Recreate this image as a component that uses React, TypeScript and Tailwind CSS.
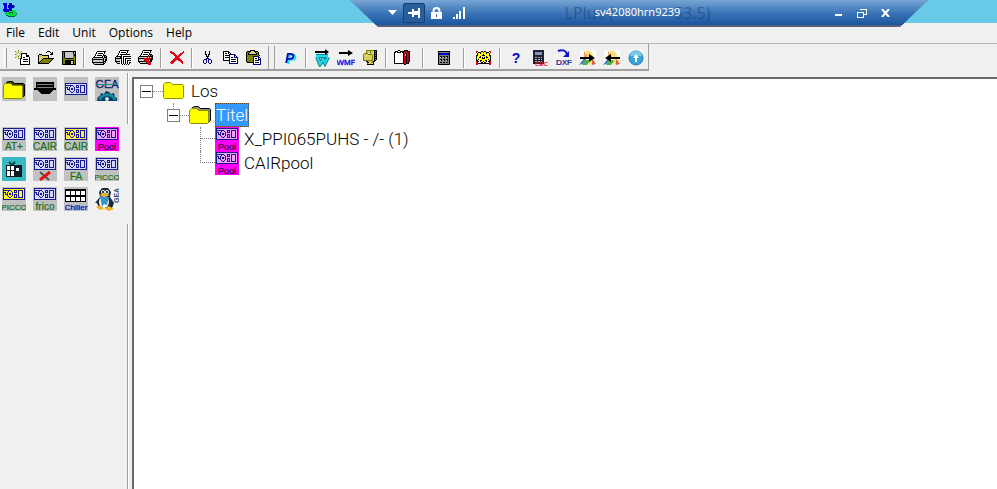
import type { ReactNode } from 'react';

const colors: Record<string, string> = {
  k: '#000000',
  w: '#ffffff',
  o: '#808000',
  O: '#b8b858',
  y: '#ffff00',
  Y: '#d8d060',
  n: '#000080',
  b: '#0000e0',
  g: '#808080',
  s: '#c8c8c8',
  r: '#e80010',
  R: '#901018',
  c: '#20d0e8',
  t: '#108090',
  l: '#00d848',
  G: '#006040',
};

// Small bitmap icons, one character for each pixel.
function Bitmap({ rows }: { rows: string[] }) {
  const width = Math.max(...rows.map((row) => row.length));
  return (
    <svg width={width} height={rows.length} viewBox={`0 0 ${width} ${rows.length}`} shapeRendering="crispEdges" aria-hidden="true">
      {rows.flatMap((row, y) =>
        row.split('').map((c, x) => (colors[c] ? <rect key={`${x}-${y}`} x={x} y={y} width={1} height={1} fill={colors[c]} /> : null)),
      )}
    </svg>
  );
}

const appIcon = [
  '.bbbb..bbb......',
  '.bbbb..nbb......',
  '..bnb.nnnnnn....',
  '..bnb.bbbbbbb...',
  '..bnb.nbbbnn....',
  '..bnb..nbb......',
  '.bbnbbbbbb......',
  '.bbbbbbbnnlll...',
  '..nnnnnlllllll..',
  '....lllGGGGllll.',
  '...GlllGllGllll.',
  '....llllllllllG.',
  '....GGlllllllG..',
  '......GGGGGGG...',
];

const newIcon = [
  '...o............',
  'o..O..o.........',
  '.O.o.O..........',
  '..O.O.kkkkkk....',
  'oO.w.OkwwwwkK...',
  '..O.O.kwwwwkkk..',
  '.O.o.OkwwwwkkkK.',
  'o..O..kwkkwwwwk.',
  '...o.kkwwwwwwwk.',
  '.....kwwkkkkkwk.',
  '.....kwwwwwwwwk.',
  '.....kwwkkkkkwk.',
  '.....kwwwwwwwwk.',
  '.....kwwwwwwwwk.',
  '.....kkkkkkkkkk.',
];

const openIcon = [
  '.........kkk....',
  '........k...k.k.',
  '.............kk.',
  '.kkk........kkk.',
  'kYYYkkkkkkk.....',
  'kYYYYYYYYYk.....',
  'kYYYYYYYYYk.....',
  'kYYYYkkkkkkkkkkk',
  'kYYYkoooooooook.',
  'kYYkoooooooook..',
  'kYkoooooooook...',
  'kkoooooooook....',
  'kkkkkkkkkkk.....',
];

const saveIcon = [
  'kkkkkkkkkkkkkk',
  'kokssssssssksk',
  'kokssssssssksk',
  'kokssssssssokk',
  'kokssssssssokk',
  'kokssssssssook',
  'kokssssssssook',
  'kookkkkkkkkook',
  'kooooooooooook',
  'kookkkkkkkkkok',
  'kookkkkkksskok',
  'kookkkkkksskok',
  'kookkkkkksskok',
  'kkkkkkkkkkkkkk',
];

const printIcon = [
  '.....kkkkkkkkk..',
  '....kwwwwwwwk...',
  '....kwkkkkkwk...',
  '...kwwwwwwwk....',
  '...kwkkkkkwkkk..',
  '..kwwwwwwwkskok.',
  '.kkkkkkkkkkskkk.',
  'kssssssssssksok.',
  'kkkkkkkkkkkkskk.',
  'kssssssYYsskskk.',
  'ksssssssssskkk..',
  'kkkkkkkkkkkksk..',
  '.kssssssssskk...',
  '..kkkkkkkkkk....',
];

const printListIcon = [
  '.....kkkkkkkkk..',
  '....kwwwwwwwk...',
  '....kwkkkkkwk...',
  '...kwwwwwwwk....',
  '...kwkkkkkkkkkk.',
  '..kwwwkwwwwwwww.',
  '.kkkkkkwkkkkkkkk',
  'ksssskkwkwwwwwww',
  'kkkkkkkwkwkkkkkk',
  'ksssswkwkwkwwwww',
  'ksssswkwkwkwkkkk',
  'kkkkkwkwkwkwkwww',
  '.kssswkwkwkwkwkk',
  '..kkkwkwkwkwkwk.',
  '.......k.k.k.k..',
];

const printSetupIcon = [
  '.....kkkkkkkkk..',
  '....kwwwwwwwk...',
  '....kwkkkkkwk...',
  '...kwwwwwwwk....',
  '...kwkkkkkwkkk..',
  '..kwwwwwwwkskok.',
  '.kkkkkkkkkrkkkk.',
  'kssssssssrsrsok.',
  'kkkkkkrrrrrrrkk.',
  'ksssssrRrrRrkkk.',
  'ksssssRrrrrskk..',
  'kkkkkkkRrrrrkk..',
  '.kssssssRrrrR...',
  '..kkkkkkkRrrr...',
  '..........rrr...',
];

const deleteIcon = [
  'rr...........r',
  'rrrr........rr',
  '.rrrr.....rrr.',
  '...rrr...rrr..',
  '....rrr.rrr...',
  '.....rrrrr....',
  '.....rrrr.....',
  '....rrrrrr....',
  '...rrrrrrrr...',
  '..rrrr..rrrr..',
  '.rrrr.....rrr.',
  'rrrr.......rr.',
  '.rr.........r.',
];

const cutIcon = [
  '..k...k..',
  '..k...k..',
  '..k...k..',
  '..kk.kk..',
  '...k.k...',
  '...kkk...',
  '....k....',
  '...nnn...',
  '.nnn.nnn.',
  'n..n.n..n',
  'n..n.n..n',
  'n..n.n..n',
  '.nn...nn.',
];

const copyIcon = [
  'kkkkkk.........',
  'kwwwwkk........',
  'kwkkwkwk.......',
  'kwwwwwnnnnnn...',
  'kwkkkknwwwwnn..',
  'kwwwwwnwwwwnwn.',
  'kwkkkknwkkwnnnn',
  'kwwwwwnwwwwwwwn',
  'kwwwwwnwkkkkkwn',
  'kkkkkknwwwwwwwn',
  '......nwkkkkkwn',
  '......nwwwwwwwn',
  '......nnnnnnnnn',
];

const pasteIcon = [
  '....kkkkk......',
  '.kkkkYYYkkkk...',
  'kookYYYYYkook..',
  'kokssssssskok..',
  'kokkkkkkkkkok..',
  'kooooooooooook.',
  'koooooonnnnnn..',
  'koooooonwwwwnn.',
  'koooooonwkkwnwn',
  'koooooonwwwwnnn',
  'koooooonwkkkkwn',
  'koooooonwwwwwwn',
  '.kkkkkknwkkkkwn',
  '.......nwwwwwwn',
  '.......nnnnnnnn',
];

const archiveIcon = [
  '...ooooooookkk.',
  '...oYYYoYYskgk.',
  '...oYYYoYYskkk.',
  '.oooo..oYYskgk.',
  'oYYYYooooYskkk.',
  'oYYYYYYYYoskgk.',
  'oYYYYYYYYoskkk.',
  'oYYYYYYYYoskgk.',
  'oYYYYYYYYoskkk.',
  'oYYYYYYYYoskgk.',
  'ooooooooooskk..',
  '...kkYYYYgkk...',
  '....kkYYggk....',
  '....oYYYYYk....',
  '....kkkkkkk....',
];

const calculatorIcon = [
  'kkkkkkkkkkkk',
  'kggggggggggk',
  'knbbbbbbbbnk',
  'knbbbbbbbbnk',
  'kggggggggggk',
  'kgkkgkkgkkgk',
  'kgskgskgskgk',
  'kggggggggggk',
  'kgkkgkkgkkgk',
  'kgskgskgskgk',
  'kggggggggggk',
  'kgkkgkkgkkgk',
  'kggggggggggk',
  'kkkkkkkkkkkk',
];

const documentsIcon = [
  '....kk....kkkk..',
  '.kkkwwkkkkRrRkkk',
  'kkwkkkkwkkrrRrRk',
  'kwwwwwwwwkRRkRRk',
  'kwwwwwwwwkrskrRk',
  'kwwwwwwwwkrskrRk',
  'kwwwwwwwwkrRkrRk',
  'kwwwwwwwwkrRkrRk',
  'kwwwwwwwwkrRkrRk',
  'kwwwwwwwwkrRkrRk',
  'kwwwwwwwwkrRkrRk',
  'kwwwwwwwwkrRkrRk',
  'kwwwwwwwwkrRkrk.',
  'kkkkkkkkkkRRkkk.',
  '..........kk....',
];

const gearsIcon = [
  'rr...kk.kk...rr.',
  'r.kkkyykyykkk.r.',
  '.kyykyyyyykyyk..',
  '.kyyyyykyyyyyk..',
  'kkyyyykkkyyyykk.',
  'kyyykyyyyykyyyk.',
  'kyykkykykykkyyk.',
  'kyyyyykkkyyyyyk.',
  'kykyyyyyyyyykyk.',
  'kkyykkyyykkyykk.',
  'rkkwkyykyykwkkr.',
  'rkwwwkkwkkwwwkr.',
  'rrkkkkkkkkkkkrr.',
  'rr...........rr.',
];

function Glyph({ children, className }: { children: ReactNode; className?: string }) {
  return (
    <svg width={18} height={18} viewBox="0 0 18 18" className={className} aria-hidden="true">
      {children}
    </svg>
  );
}

function ExportArrow({ flip = false }: { flip?: boolean }) {
  return (
    <Glyph>
      <path d="M1 1h16v15H1z" fill="#fafafa" />
      <path d="M5 2l5 6-5 2z" fill="#f3a45d" />
      <path d="M7 2c6-1 7 3 7 8H9z" fill="#f6df6b" />
      <path d="M0 16l6-8 2 5z" fill="#3974c8" />
      <path d="M5 11h7l-4 5H3z" fill="#53ad58" />
      <path d="M11 10l5 1v4l-6 1z" fill="#e3e85d" />
      <path d="M13 10l4 5-4 1z" fill="#db5c54" />
      {flip ? (
        <path d="M17 10H8v3L2 9l6-4v3h9z" fill="#000" />
      ) : (
        <path d="M1 8h9V5l6 4-6 4v-3H1z" fill="#000" />
      )}
    </Glyph>
  );
}

const fileTools = [
  [
    { label: 'New', icon: <Bitmap rows={newIcon} /> },
    { label: 'Open', icon: <Bitmap rows={openIcon} /> },
    { label: 'Save', icon: <Bitmap rows={saveIcon} /> },
  ],
  [
    { label: 'Print', icon: <Bitmap rows={printIcon} /> },
    { label: 'Print list', icon: <Bitmap rows={printListIcon} /> },
    { label: 'Print setup', icon: <Bitmap rows={printSetupIcon} /> },
  ],
  [{ label: 'Delete', icon: <Bitmap rows={deleteIcon} /> }],
  [
    { label: 'Cut', icon: <Bitmap rows={cutIcon} /> },
    { label: 'Copy', icon: <Bitmap rows={copyIcon} /> },
    { label: 'Paste', icon: <Bitmap rows={pasteIcon} /> },
  ],
];

const unitTools = [
  {
    gap: 'w-2',
    tools: [
      {
        label: 'Price',
        icon: (
          <Glyph className="drop-shadow-[2px_1px_0_#18dff0]">
            <text x="4" y="14" fontFamily="Liberation Sans, sans-serif" fontSize="14" fontWeight="bold" fontStyle="italic" fill="#0808b8">P</text>
          </Glyph>
        ),
      },
    ],
  },
  {
    gap: 'w-2',
    tools: [
      {
        label: 'Export W',
        icon: (
          <Glyph>
            <path d="M3 7h12M4 8l3 7 3-5 2 4 3-6" fill="none" stroke="#148090" strokeWidth="4" />
            <path d="M3 7h12M4 8l3 7 3-5 2 4 3-6" fill="none" stroke="#20dce8" strokeWidth="2" />
            <path d="M2 2h10V0l4 3-4 3V4H2z" fill="#000" />
          </Glyph>
        ),
      },
      {
        label: 'Export WMF',
        icon: (
          <Glyph>
            <path d="M2 3h9V1l5 3-5 3V5H2z" fill="#000" />
            <text x="9" y="16" textAnchor="middle" fontFamily="Liberation Sans, sans-serif" fontSize="8" fill="#0000e0" stroke="#0000e0" strokeWidth="0.3">WMF</text>
          </Glyph>
        ),
      },
      { label: 'Archive', icon: <Bitmap rows={archiveIcon} /> },
    ],
  },
  { gap: 'w-[18px]', tools: [{ label: 'Documents', icon: <Bitmap rows={documentsIcon} /> }] },
  { gap: 'w-4', tools: [{ label: 'Calculator', icon: <Bitmap rows={calculatorIcon} /> }] },
  { gap: 'w-2', tools: [{ label: 'Configuration', icon: <Bitmap rows={gearsIcon} /> }] },
  {
    gap: '',
    tools: [
      {
        label: 'Help',
        icon: (
          <Glyph>
            <text x="9" y="14" textAnchor="middle" fontFamily="Liberation Sans, sans-serif" fontSize="14" fontWeight="bold" fill="#0000d8">?</text>
          </Glyph>
        ),
      },
      {
        label: 'Calculate',
        icon: (
          <Glyph>
            <rect x="2" y="1" width="11" height="14" fill="#202030" />
            <rect x="4" y="3" width="7" height="3" fill="#8098c0" />
            <path d="M4 8.500h7M4 10.500h7M4 12.500h7" stroke="#a8a8b0" strokeDasharray="2 1" />
            <text x="4" y="17" fontFamily="Liberation Sans, sans-serif" fontSize="6" fontWeight="bold" fill="#e01818">CBC</text>
          </Glyph>
        ),
      },
      {
        label: 'Export DXF',
        icon: (
          <Glyph>
            <path d="M3 2c5-2 8 0 9 3" fill="none" stroke="#1010d0" strokeWidth="2" />
            <path d="M14 2v6H8z" fill="#1010d0" />
            <text x="9" y="16" textAnchor="middle" fontFamily="Liberation Sans, sans-serif" fontSize="8" fill="#000080" stroke="#000080" strokeWidth="0.2">DXF</text>
          </Glyph>
        ),
      },
      { label: 'Export', icon: <ExportArrow /> },
      { label: 'Import', icon: <ExportArrow flip /> },
      {
        label: 'Update',
        icon: (
          <Glyph>
            <circle cx="9" cy="9" r="7" fill="#38a5d8" stroke="#287fae" />
            <path d="M3 7a6 5 0 0 1 12 0" fill="#78c8e8" />
            <path d="M9 5l3 4h-2v4H8V9H6z" fill="#fff" />
          </Glyph>
        ),
      },
    ],
  },
];

function ToolButton({ label, wide = false, children }: { label: string; wide?: boolean; children: ReactNode }) {
  return (
    <button aria-label={label} title={label} className={`flex h-6 shrink-0 items-center justify-center ${wide ? 'w-6' : 'w-[23px]'}`}>
      {children}
    </button>
  );
}

function Separator({ className = 'w-2' }: { className?: string }) {
  return (
    <span className={`flex h-5 shrink-0 justify-center ${className}`}>
      <span className="w-px bg-[#a0a0a0]" />
      <span className="w-px bg-white" />
    </span>
  );
}

function Folder({ open = false, boxed = false }: { open?: boolean; boxed?: boolean }) {
  return (
    <svg width={boxed ? 24 : 22} height={boxed ? 24 : 20} viewBox={boxed ? '0 0 24 24' : '0 0 22 20'} aria-hidden="true">
      {boxed && <rect width="24" height="24" fill="#c0c0c0" />}
      <g transform={boxed ? 'translate(1 3)' : undefined}>
        {(open || boxed) && <path d="M3.500 4V2.500l2-1h4l2 2h9l1 1v11l-2 2V6h-16z" fill={boxed ? '#404000' : '#909090'} stroke="#000" />}
        <path
          d={open || boxed ? 'M0.500 17.500V5.500l2-2h5l2 2h9l1 1v11l-1 1h-17z' : 'M0.500 16.500V3.500l2-2h5l2 2h10l1 1v12l-1 1h-18z'}
          fill="#ffff00"
          stroke="#909000"
        />
      </g>
    </svg>
  );
}

// Fan housing, filter pair and coil of an air handling unit.
const unitRows = [
  'nnnnnnnnnnnnnnnnnnnnnn',
  'n....................n',
  'nnnnnnnn...nnn.nnnnn.n',
  'n....n..n..n.n.n...n.n',
  'nnn.n....n.nnn.n...n.n',
  'n.n.n.nn.n.....n...n.n',
  'n.nnn.nn.n.nnn.n...n.n',
  'n...n....n.n.n.n...n.n',
  'n....n..n..n.n.n...n.n',
  'n.....nn...nnn.nnnnn.n',
  'n....................n',
  'nnnnnnnnnnnnnnnnnnnnnn',
];

type UnitProps = { text?: string; bg?: string; fill?: string; color?: string; size?: number; crossed?: boolean };

function UnitIcon({ text, bg = '#c0c0c0', fill = '#d4d8ff', color = '#107018', size = 10, crossed }: UnitProps) {
  const top = text || crossed ? 1 : 6;
  return (
    <svg width="24" height="24" viewBox="0 0 24 24" aria-hidden="true">
      <rect width="24" height="24" fill={bg} />
      <g transform={`translate(1 ${top})`} shapeRendering="crispEdges">
        <rect width="22" height="12" fill={fill} />
        {unitRows.flatMap((row, y) =>
          row.split('').map((c, x) => (c === 'n' ? <rect key={`${x}-${y}`} x={x} y={y} width={1} height={1} fill="#181890" /> : null)),
        )}
      </g>
      {text && (
        <text x="12" y="23" textAnchor="middle" fontFamily="Liberation Sans, sans-serif" fontSize={size} fill={color} stroke={color} strokeWidth="0.2">
          {text}
        </text>
      )}
      {crossed && (
        <g fill="none">
          <path d="M7 15l9 8" stroke="#505050" strokeWidth="2" />
          <path d="M7 23l10-8" stroke="#e81010" strokeWidth="3" />
        </g>
      )}
    </svg>
  );
}

function PoolIcon() {
  return <UnitIcon text="Pool" bg="#ff00ff" fill="#f0a0ff" color="#300030" size={9} />;
}

function OutletIcon() {
  return (
    <svg width="24" height="24" viewBox="0 0 24 24" shapeRendering="crispEdges" aria-hidden="true">
      <rect width="24" height="24" fill="#c0c0c0" />
      <path d="M3 5h18v6h2v2h-3l-4 4H8l-4-4H1v-2h2z" fill="#000" />
      <path d="M4 7.500h16M4 10.500h16" stroke="#808080" />
    </svg>
  );
}

function GeaIcon() {
  return (
    <svg width="24" height="24" viewBox="0 0 24 24" aria-hidden="true">
      <rect width="24" height="24" fill="#c0c0c0" />
      <text x="12" y="11" textAnchor="middle" fontFamily="Liberation Sans, sans-serif" fontSize="11" fill="#102070" stroke="#102070" strokeWidth="0.3">GEA</text>
      <path d="M1 7.500h22" stroke="#28859b" />
      <path d="M2 24l1-4 2-1 1-3 3 1 2-3 3 1 2 2 3-1 1 4 2 1v3z" fill="#003860" />
      <path d="M5 23c1-7 13-7 15 0" fill="none" stroke="#108898" strokeWidth="3" />
      <circle cx="12" cy="22" r="2" fill="#d0e8f0" />
    </svg>
  );
}

function ControlIcon() {
  return (
    <svg width="24" height="24" viewBox="0 0 24 24" aria-hidden="true">
      <rect width="24" height="24" rx="1" fill="#38b8c0" />
      <path d="M7 5l3 3 3-3" fill="none" stroke="#064850" strokeWidth="2" />
      <rect x="4" y="8" width="16" height="12" fill="#101820" />
      <path d="M5 9h3v4H5zM9 9h3v4H9zM5 14h3v5H5zM9 14h3v5H9z" fill="#fff" />
      <path d="M14 11h3v3h-3z" fill="#fff" />
    </svg>
  );
}

function ChillerIcon() {
  return (
    <svg width="24" height="24" viewBox="0 0 24 24" aria-hidden="true">
      <rect width="24" height="24" fill="#c0c0c0" />
      <rect x="1" y="2" width="21" height="13" fill="#000" />
      <path d="M2 4h4v4H2zM7 4h4v4H7zM12 4h4v4h-4zM17 4h4v4h-4zM2 10h4v4H2zM7 10h4v4H7zM12 10h4v4h-4zM17 10h4v4h-4z" fill="#fff" />
      <text x="12" y="23" textAnchor="middle" fontFamily="Liberation Sans, sans-serif" fontSize="8" fill="#0000d0" stroke="#0000d0" strokeWidth="0.2">Chiller</text>
    </svg>
  );
}

function PenguinIcon() {
  return (
    <svg width="24" height="24" viewBox="0 0 24 24" aria-hidden="true">
      <rect width="24" height="24" fill="#f4f4f4" />
      <path d="M0 16l5-6-1-5 3-4h6l3 4-1 5 4 6-2 5H4l-2-5z" fill="#182838" />
      <ellipse cx="9" cy="15" rx="5" ry="6" fill="#f8f8f8" />
      <path d="M5 9l9 1-2 8-3-1-2 3z" fill="#3894c8" />
      <circle cx="8" cy="5" r="2" fill="#fff" />
      <circle cx="12" cy="5" r="2" fill="#fff" />
      <circle cx="8" cy="5" r="1" fill="#000" />
      <circle cx="12" cy="5" r="1" fill="#000" />
      <path d="M4 8l5-2 6 2-5 2zM1 20l4-2 4 4-4 1zM9 22l5-3 5 3-5 2z" fill="#f0b020" />
      <text transform="translate(24 16) rotate(-90)" fontFamily="Liberation Sans, sans-serif" fontSize="7" fontWeight="bold" fill="#184878">GEA</text>
    </svg>
  );
}

const units = [
  { label: 'AT+', icon: <UnitIcon text="AT+" /> },
  { label: 'CAIR', icon: <UnitIcon text="CAIR" /> },
  { label: 'CAIR yellow', icon: <UnitIcon text="CAIR" fill="#fff050" /> },
  { label: 'Pool', icon: <PoolIcon /> },
  { label: 'Control', icon: <ControlIcon /> },
  { label: 'Remove unit', icon: <UnitIcon crossed /> },
  { label: 'FA', icon: <UnitIcon text="FA" /> },
  { label: 'PICCO', icon: <UnitIcon text="PICCO" size={8} /> },
  { label: 'PICCO yellow', icon: <UnitIcon text="PICCO" fill="#ffff20" size={8} /> },
  { label: 'frico', icon: <UnitIcon text="frico" /> },
  { label: 'Chiller', icon: <ChillerIcon /> },
  { label: 'GEA penguin', icon: <PenguinIcon /> },
];

const generalItems = [
  { label: 'Folder', icon: <Folder boxed /> },
  { label: 'Outlet', icon: <OutletIcon /> },
  { label: 'Unit', icon: <UnitIcon /> },
  { label: 'GEA', icon: <GeaIcon /> },
];

function Palette() {
  return (
    <aside className="flex w-[132px] shrink-0 pt-0.5">
      <div className="flex-1 pt-1 pl-0.5">
        <div className="grid grid-cols-[repeat(4,24px)] gap-x-[7px]">
          {generalItems.map((item) => (
            <button key={item.label} aria-label={item.label}>{item.icon}</button>
          ))}
        </div>
        <div className="mt-[26px] grid grid-cols-[repeat(4,24px)] gap-x-[7px] gap-y-1.5">
          {units.map((item) => (
            <button key={item.label} aria-label={item.label}>{item.icon}</button>
          ))}
        </div>
      </div>
      <div className="flex w-[5px] flex-col gap-[100px]">
        <div className="h-[51px] w-0.5 border-r border-r-white bg-[#a0a0a0]" />
        <div className="w-0.5 flex-1 border-r border-r-white bg-[#a0a0a0]" />
      </div>
    </aside>
  );
}

function Expander({ label }: { label: string }) {
  return (
    <button aria-label={label} className="flex size-[13px] items-center justify-center border border-[#808080] bg-white">
      <span className="h-px w-[9px] bg-black" />
    </button>
  );
}

function Tree() {
  return (
    <ul role="tree" className="font-['Roboto','Liberation_Sans',sans-serif] text-[17px] leading-6 font-light text-black">
      <li role="treeitem" aria-expanded="true">
        <div className="flex h-6 items-center pl-1.5">
          <Expander label="Collapse Los" />
          <span className="w-2.5 border-t border-dotted border-[#808080]" />
          <Folder />
          <span className="ml-1.5">Los</span>
        </div>
        <ul role="group">
          <li role="treeitem" aria-expanded="true" aria-selected="true">
            <div className="flex h-6 items-center pl-[33px]">
              <div className="flex h-6 flex-col items-center">
                <span className="h-1.5 border-l border-dotted border-[#808080]" />
                <Expander label="Collapse Titel" />
              </div>
              <span className="w-[9px] border-t border-dotted border-[#808080]" />
              <Folder open />
              <span className="ml-1 h-6 border border-dotted border-[#604020] bg-[#3399ff] leading-[22px] text-white">Titel</span>
            </div>
            <ul role="group">
              {['X_PPI065PUHS - /- (1)', 'CAIRpool'].map((name, i) => (
                <li key={name} role="treeitem" className="flex h-6 pl-[66px]">
                  <span className={`w-[15px] border-l border-dotted border-[#808080] ${i === 0 ? 'h-6' : 'h-3 border-b'}`}>
                    {i === 0 && <span className="block h-3 border-b border-dotted border-[#808080]" />}
                  </span>
                  <PoolIcon />
                  <span className="ml-[5px]">{name}</span>
                </li>
              ))}
            </ul>
          </li>
        </ul>
      </li>
    </ul>
  );
}

function ConnectionBar() {
  return (
    <div className="absolute top-0 right-[69px] left-[350px] h-[27px] bg-[#56617f] font-['Noto_Sans',sans-serif] [clip-path:polygon(0_0,100%_0,calc(100%-28px)_100%,28px_100%)]">
      <div className="flex h-[25px] items-center bg-linear-to-b from-[#78a6d5] via-[#3f78b9] via-48% to-[#1a559e] pr-[35px] pl-8 text-white">
        <div className="flex flex-1 items-center">
          <button aria-label="Connection menu" className="flex w-5 justify-center">
            <svg width="9" height="5" viewBox="0 0 9 5"><path d="M0 0h9L4.500 5z" fill="#fff" /></svg>
          </button>
          <button aria-label="Pin" className="ml-px flex h-5 w-[22px] items-center justify-center rounded-xs border border-[#183f70] bg-[#285e9e]">
            <svg width="12" height="10" viewBox="0 0 12 10" shapeRendering="crispEdges">
              <path d="M0 4h4V1h2v2h4V0h2v10h-2V7H6v2H4V6H0z" fill="#fff" />
            </svg>
          </button>
          <button aria-label="Secure connection" className="flex w-[22px] justify-center">
            <svg width="11" height="12" viewBox="0 0 11 12">
              <path d="M2.500 6V4a3 3 0 0 1 6 0v2" fill="none" stroke="#fff" strokeWidth="2" />
              <path d="M0 5h11v7H0zM5 7v3h1V7z" fill="#fff" fillRule="evenodd" />
            </svg>
          </button>
          <button aria-label="Connection quality" className="flex w-6 justify-center">
            <svg width="12" height="12" viewBox="0 0 12 12" shapeRendering="crispEdges">
              <path d="M0 10h2v2H0zM3 7h2v5H3zM6 4h2v8H6zM10 0h2v12h-2z" fill="#fff" />
            </svg>
          </button>
        </div>
        <div className="grid w-[146px] items-center">
          <div className="col-start-1 row-start-1 flex justify-between text-base text-[#123e75]/50">
            <span>LPlus (</span>
            <span>53.5)</span>
          </div>
          <span className="col-start-1 row-start-1 text-center text-[11px]">sv42080hrn9239</span>
        </div>
        <div className="flex flex-1 items-center justify-end gap-[7px]">
          <button aria-label="Minimize" className="flex w-4 justify-center">
            <svg width="8" height="8" viewBox="0 0 8 8"><path d="M0 5h7v2H0z" fill="#fff" /></svg>
          </button>
          <button aria-label="Restore" className="flex w-4 justify-center">
            <svg width="10" height="10" viewBox="0 0 10 10" fill="none" stroke="#fff" shapeRendering="crispEdges">
              <path d="M3 1h6.500v5H7M0.500 4.500h6v5h-6zM0 4h7" />
            </svg>
          </button>
          <button aria-label="Close" className="flex w-4 justify-center">
            <svg width="9" height="8" viewBox="0 0 9 8"><path d="M1 0l7 8M8 0L1 8" stroke="#fff" strokeWidth="2" /></svg>
          </button>
        </div>
      </div>
    </div>
  );
}

export default function App() {
  return (
    <div className="relative flex h-screen flex-col overflow-hidden bg-[#f0f0f0] font-['Liberation_Sans',sans-serif]">
      <header className="h-[23px] shrink-0 bg-[#68c9e8] pt-[3px] pl-0.5">
        <Bitmap rows={appIcon} />
      </header>
      <ConnectionBar />

      <nav className="flex h-[21px] shrink-0 items-center gap-[13px] border-b border-[#b8b8b8] pl-1.5 font-['Open_Sans',sans-serif] text-xs text-black">
        {['File', 'Edit', 'Unit', 'Options', 'Help'].map((item) => (
          <button key={item}>{item}</button>
        ))}
      </nav>

      <div role="toolbar" aria-label="Main" className="flex h-[27px] w-fit shrink-0 items-center border-r border-b-2 border-[#a0a0a0] pt-0.5">
        <span className="mr-1 ml-1 h-5 w-[3px] border-r border-l border-r-[#a0a0a0] border-l-white" />
        {fileTools.map((group, i) => (
          <div key={i} className="flex items-center">
            {i > 0 && <Separator />}
            {group.map((tool) => (
              <ToolButton key={tool.label} label={tool.label}>{tool.icon}</ToolButton>
            ))}
          </div>
        ))}
        <span className="mx-[3px] h-6 w-[7px] border-r border-l border-[#a0a0a0]" />
        {unitTools.map((group, i) => (
          <div key={i} className="flex items-center">
            {group.tools.map((tool) => (
              <ToolButton key={tool.label} label={tool.label} wide>{tool.icon}</ToolButton>
            ))}
            {group.gap && <Separator className={group.gap} />}
          </div>
        ))}
      </div>

      <div className="flex min-h-0 flex-1">
        <Palette />
        <main className="mt-1.5 min-w-0 flex-1 overflow-auto border-t-2 border-l-2 border-[#696969] bg-white">
          <Tree />
        </main>
      </div>
    </div>
  );
}
